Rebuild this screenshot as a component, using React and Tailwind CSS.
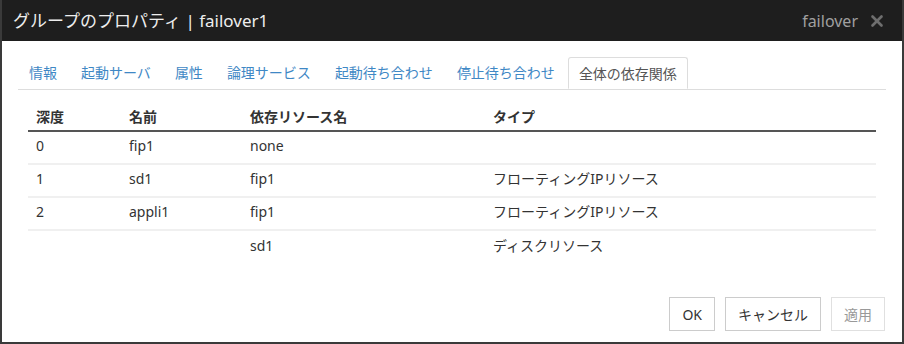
import { X } from "lucide-react";

const tabs = ["情報", "起動サーバ", "属性", "論理サービス", "起動待ち合わせ", "停止待ち合わせ", "全体の依存関係"];

const rows = [
  ["0", "fip1", "none", ""],
  ["1", "sd1", "fip1", "フローティングIPリソース"],
  ["2", "appli1", "fip1", "フローティングIPリソース"],
  ["", "", "sd1", "ディスクリソース"],
];

const cols = "grid grid-cols-[93px_121px_243px_1fr]";

export default function App() {
  return (
    <div
      className="w-[904px] h-[344px] bg-white border-2 border-t-0 border-[#3a3a3a] flex flex-col text-[#333]"
      style={{ fontFamily: '"Noto Sans", "Noto Sans CJK JP", sans-serif' }}
    >
      <div className="h-[41px] bg-[#1e1e1e] flex items-center justify-between pl-[11px] pr-[16px] shrink-0">
        <span className="text-[17px] text-[#eeeeee]">グループのプロパティ | failover1</span>
        <div className="flex items-center gap-[10px]">
          <span className="text-[16px] text-[#a0a0a0]">failover</span>
          <X size={18} strokeWidth={3.5} className="text-[#6e6e6e]" />
        </div>
      </div>

      <div className="flex-1 flex flex-col px-[16px] pt-[16px]">
        <div className="flex border-b border-[#dddddd] text-[14px]">
          {tabs.map((t, i) =>
            i === tabs.length - 1 ? (
              <div
                key={t}
                className="px-[10px] h-[32px] leading-[32px] mr-[2px] -mb-px bg-white border border-[#dddddd] border-b-white rounded-t-[3px] text-[#555]"
              >
                {t}
              </div>
            ) : (
              <div key={t} className="px-[11px] h-[32px] leading-[32px] mr-[2px] text-[#3f88c5]">
                {t}
              </div>
            )
          )}
        </div>

        <div className="mt-[17px] ml-[10px] w-[848px] text-[14px]">
          <div className={`${cols} border-b-2 border-[#555] font-bold leading-[20px] pb-[3px]`}>
            <div className="px-[8px]">深度</div>
            <div className="px-[8px]">名前</div>
            <div className="px-[8px]">依存リソース名</div>
            <div className="px-[8px]">タイプ</div>
          </div>
          {rows.map((r, i) => (
            <div
              key={i}
              className={`${cols} h-[33px] items-center pb-[3px] ${i < rows.length - 1 ? "border-b-2 border-[#f0f0f0]" : ""}`}
            >
              {r.map((c, j) => (
                <div key={j} className="px-[8px] leading-[20px]">
                  {c}
                </div>
              ))}
            </div>
          ))}
        </div>

        <div className="mt-auto mb-[11px] flex justify-end gap-[10px] pr-[1px] text-[14px]">
          <button className="h-[34px] px-3 border border-[#cccccc] bg-white text-[#333]">OK</button>
          <button className="h-[34px] px-3 border border-[#cccccc] bg-white text-[#333]">キャンセル</button>
          <button className="h-[34px] px-3 border border-[#e0e0e0] bg-white text-[#999]">適用</button>
        </div>
      </div>
    </div>
  );
}
